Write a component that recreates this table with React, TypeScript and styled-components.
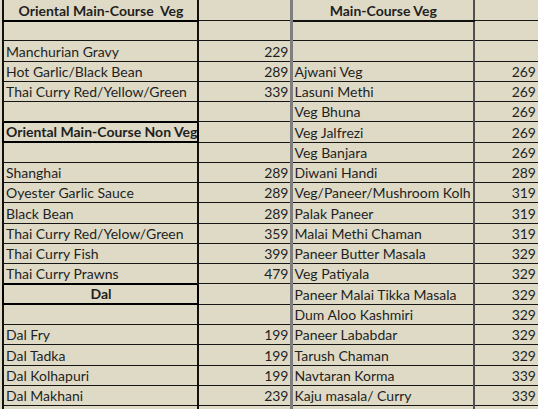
import React from "react";
import styled, { createGlobalStyle } from "styled-components";

const GlobalStyle = createGlobalStyle`
  html, body {
    margin: 0;
    padding: 0;
    background: #dedac6;
    overflow: hidden;
  }
  body {
    font-family: Lato, "Liberation Sans", sans-serif;
  }
`;

type Row = {
  left: string;
  leftPrice?: number;
  leftHead?: boolean;
  leftBox?: boolean;
  right: string;
  rightPrice?: number;
  rightHead?: boolean;
};

const rows: Row[] = [
  { left: "Oriental Main-Course\u00a0 Veg", leftHead: true, right: "Main-Course Veg", rightHead: true },
  { left: "", right: "" },
  { left: "Manchurian Gravy", leftPrice: 229, right: "" },
  { left: "Hot Garlic/Black Bean", leftPrice: 289, right: "Ajwani Veg", rightPrice: 269 },
  { left: "Thai Curry Red/Yellow/Green", leftPrice: 339, right: "Lasuni Methi", rightPrice: 269 },
  { left: "", right: "Veg Bhuna", rightPrice: 269 },
  { left: "Oriental Main-Course Non Veg", leftHead: true, leftBox: true, right: "Veg Jalfrezi", rightPrice: 269 },
  { left: "", right: "Veg Banjara", rightPrice: 269 },
  { left: "Shanghai", leftPrice: 289, right: "Diwani Handi", rightPrice: 289 },
  { left: "Oyester Garlic Sauce", leftPrice: 289, right: "Veg/Paneer/Mushroom Kolh", rightPrice: 319 },
  { left: "Black Bean", leftPrice: 289, right: "Palak Paneer", rightPrice: 319 },
  { left: "Thai Curry Red/Yelow/Green", leftPrice: 359, right: "Malai Methi Chaman", rightPrice: 319 },
  { left: "Thai Curry Fish", leftPrice: 399, right: "Paneer Butter Masala", rightPrice: 329 },
  { left: "Thai Curry Prawns", leftPrice: 479, right: "Veg Patiyala", rightPrice: 329 },
  { left: "Dal", leftHead: true, leftBox: true, right: "Paneer Malai Tikka Masala", rightPrice: 329 },
  { left: "", right: "Dum Aloo Kashmiri", rightPrice: 329 },
  { left: "Dal Fry", leftPrice: 199, right: "Paneer Lababdar", rightPrice: 329 },
  { left: "Dal Tadka", leftPrice: 199, right: "Tarush Chaman", rightPrice: 329 },
  { left: "Dal Kolhapuri", leftPrice: 199, right: "Navtaran Korma", rightPrice: 339 },
  { left: "Dal Makhani", leftPrice: 239, right: "Kaju masala/ Curry", rightPrice: 339 },
  { left: "", right: "" },
];

const Sheet = styled.table`
  border-collapse: collapse;
  table-layout: fixed;
  width: 535px;
  margin: -1px 0 0 2px;
  font-size: 14px;
  color: #1f1f1f;
`;

const Column = styled.col<{ $w: number }>`
  width: ${(p) => p.$w}px;
`;

const SheetRow = styled.tr<{ $first?: boolean }>`
  height: ${(p) => (p.$first ? "21px" : "20.27px")};
`;

const Cell = styled.td<{
  $col: "a" | "b" | "c" | "d";
  $head?: boolean;
  $box?: boolean;
}>`
  padding: 0 ${(p) => (p.$col === "d" ? "2px" : "1px")} 1px 2px;
  vertical-align: bottom;
  white-space: nowrap;
  overflow: hidden;
  line-height: 17px;
  border-top: 1px solid #161616;
  border-bottom: 1px solid #161616;
  border-right: ${(p) => (p.$col === "d" ? "none" : "inherit")};
  text-align: ${(p) =>
    p.$col === "b" || p.$col === "d" ? "right" : p.$head ? "center" : "left"};
  font-weight: ${(p) => (p.$head ? 700 : 400)};
  border-left: ${(p) =>
    p.$col === "c"
      ? "3px solid #7e7e7e"
      : p.$col === "d"
      ? "2px solid #505050"
      : "2px solid #111"};
  ${(p) => (p.$box ? "border: 2px solid #000;" : "")}
  ${(p) => (p.$head && p.$col === "a" ? "border-bottom: 2px solid #000;" : "")}
  ${(p) => (p.$head && p.$col === "c" ? "border-bottom: 2px solid #111;" : "")}
`;

export default function App() {
  return (
    <>
      <GlobalStyle />
      <Sheet>
        <colgroup>
          <Column $w={195} />
          <Column $w={93} />
          <Column $w={183} />
          <Column $w={64} />
        </colgroup>
        <tbody>
          {rows.map((r, i) => (
            <SheetRow key={i} $first={i === 0}>
              <Cell $col="a" $head={r.leftHead} $box={r.leftBox}>
                {r.left}
              </Cell>
              <Cell $col="b">{r.leftPrice ?? ""}</Cell>
              <Cell $col="c" $head={r.rightHead}>
                {r.right}
              </Cell>
              <Cell $col="d">{r.rightPrice ?? ""}</Cell>
            </SheetRow>
          ))}
        </tbody>
      </Sheet>
    </>
  );
}
